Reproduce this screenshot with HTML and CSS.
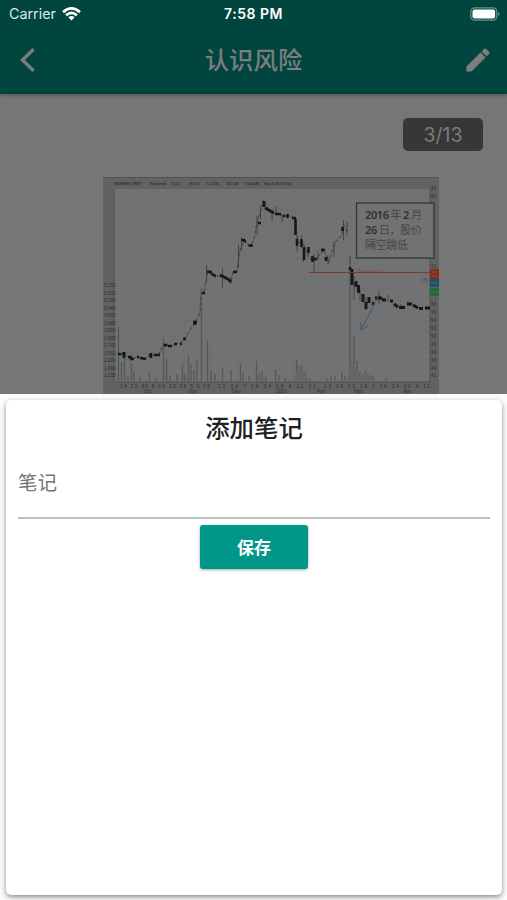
FILE: index.html
```html
<!DOCTYPE html>
<html lang="zh-CN">
<head>
<meta charset="utf-8">
<title>认识风险</title>
<link rel="stylesheet" href="styles.css">
</head>
<body>
<div class="screen">
  <header class="header">
    <div class="status">
      <div class="carrier"><span>Carrier</span>
        <svg width="19" height="14" viewBox="0 0 18 14" preserveAspectRatio="none" fill="none" stroke="#fff" stroke-width="2.6"><path d="M1 5.2Q9-2.3 17 5.2M3.9 8.3Q9 3.4 14.1 8.3"/><path d="M6 10.2Q9 7.9 12 10.2L9 13.5Z" fill="#fff" stroke="none"/></svg>
      </div>
      <div class="time">7:58 PM</div>
      <svg class="battery" width="31" height="14" viewBox="0 0 31 14"><rect x=".8" y=".8" width="26" height="12.4" rx="3.6" fill="none" stroke="#6a958e" stroke-width="1.2"/><rect x="2.5" y="2.5" width="22.6" height="9" rx="2" fill="#fff"/><path d="M28.2 4.8Q31 7 28.2 9.2Z" fill="#6a958e"/></svg>
    </div>
    <div class="nav">
      <svg width="17" height="24" viewBox="0 0 17 24" fill="none" stroke="#7d7d80" stroke-width="3.4"><path d="M14.500 1.2L3.500 12L14.500 22.8"/></svg>
      <h1>认识风险</h1>
      <svg width="30" height="30" viewBox="0 0 24 24" fill="#7e7d80" stroke="#7e7d80" stroke-width=".5" stroke-linejoin="round"><path d="M3 17.25V21h3.75L17.81 9.94l-3.75-3.75L3 17.25zM20.71 7.04a1 1 0 0 0 0-1.41l-2.34-2.34a1 1 0 0 0-1.41 0l-1.83 1.83 3.75 3.75 1.83-1.83z"/></svg>
    </div>
  </header>
  <main class="content">
    <div class="counter">3/13</div>
    <svg class="chart" width="336" height="217" viewBox="103 177 336 217">
      <rect x="103" y="177" width="336" height="217" fill="#626262"/>
      <rect x="114" y="189" width="316" height="193" fill="#707274"/>
      <path d="M103 177.5H439" stroke="#525252"/>
      <path d="M114 210H430M114 226H430M114 242H430M114 258H430M114 289H430M114 305H430M114 321H430M114 337H430M114 353H430M130 189V382M157 189V382M184 189V382M211 189V382M238 189V382M265 189V382M292 189V382M319 189V382M373 189V382M400 189V382" stroke="#6d6f71" stroke-width=".7"/>
      <path d="M114 189V382H430V189" fill="none" stroke="#4a4a4a" stroke-width=".8"/>
      <g class="ticks">
        <g class="legend"><text x="114" y="185">GESHEN, [TNT]</text><text x="150" y="184.500">Weekend</text><text x="171" y="184.500">1=1.0</text><text x="189" y="184.500">H=1.0</text><text x="207" y="184.500">L=1.04</text><text x="226" y="184.500">O=1.04</text><text x="245" y="184.500">V=42.0K</text><text x="264" y="184.500">Sep 0.00 / 0.00p</text></g>
        <text x="104" y="287">5.720</text><text x="104" y="294.500">5.600</text><text x="104" y="302">5.360</text><text x="104" y="309.500">5.460</text><text x="104" y="317">4.500</text><text x="104" y="324.500">3.880</text><text x="104" y="332">3.500</text><text x="104" y="339.500">2.880</text><text x="104" y="347">2.700</text><text x="104" y="354.500">2.500</text><text x="104" y="362">2.200</text><text x="104" y="369.500">1.600</text><text x="104" y="377">1.150</text>
        <text x="431" y="190">81</text><text x="431" y="198">80</text><text x="431" y="268">71</text><text x="431" y="306">68</text><text x="431" y="314">76</text><text x="431" y="322">54</text><text x="431" y="330">52</text><text x="431" y="338">53</text><text x="431" y="346">45</text><text x="431" y="354">43</text><text x="431" y="362">38</text><text x="431" y="370">40</text><text x="431" y="377">41</text>
        <text x="120" y="387.500" textLength="90">14 23 30 8 16 20 28 5 9 19</text><text x="218" y="387.500" textLength="98">13 20 7 14 24 28 4 11 21</text><text x="324" y="387.500" textLength="106">12 19 22 28 7 14 24 30 4 11</text><text x="144" y="393">Oct</text><text x="189" y="393">Nov</text><text x="232" y="393">Dec</text><text x="276" y="393">2016</text><text x="317" y="393">Feb</text><text x="354" y="393">Mar</text><text x="403" y="393">Apr</text>
      </g>
      <path class="volume" d="M118.500 381V326M121.500 381V362M124.500 381V358M128 381V376M131.500 381V363M134 381V371M140 381V377M149.500 381V372M156 381V378M163.500 381V338M166.500 381V359M170 381V376M177 381V374M182.500 381V364M185 381V374M188.500 381V356M191 381V364M194 381V370M197 381V361M201.500 381V289M207.500 381V340M211 381V371M215 381V374M222.500 381V368M231 381V370M240.500 381V363M243 381V373M249 381V376M256.500 381V361M259 381V375M262 381V371M266 381V376M275.500 381V370M279 381V375M285 381V378M296.500 381V360M299 381V366M302 381V366M305 381V372M310 381V378M327 381V378M331 381V376M335 381V376M342 381V372M345 381V376M350 381V276M354 381V336M357 381V361M360 381V372M365 381V370M368 381V376M373 381V376M386 381V378"/>
      <path d="M347 381L351 359L355 366L360 378L366 371L376 381M294 381L298 365L304 373L309 381M256 381L261 372L266 381" fill="#656763"/>
      <path class="trend" d="M118 355L124 354L130 359L138 357L145 359L150 355L158 355.500L163 346L170 346L180 343L185 338L190 330L196 321L200 313L201 293L204 293L208 270L210 272L218 276L225 278L231 282L233 272L237 271L240 250L244 241L250 246L254 240L257 222L261 210L264 202L270 211L276 214L283 216L290 215L295 220L298 242L304 245L308 255L313 262L318 257L324 250L329 262L335 242L342 235L344 226L347 232"/>
      <path class="wick" d="M222.500 268V288M231 277V284M206.500 265V283M238.500 245V268M241.500 237V251M257 216V235M260.500 205V219M263 200V207M272 209V221M276 206V214M282 214V222M297 236V252M301.500 235V248M303.500 248V262M308 247V257M314 254V273M318 251V260M323 248V251M328 255V264M334 242V257M343.500 220V240M347 222V235M350 256V275M354 276V300M360 290V301M366 297V310M379 291V304M388 295V302M401 304V309M408 301V306M421 307V310"/>
      <path class="candles" d="M118 354H121M122 354H125.500M124 352V358M128 357H132M130 359H134M137 357H139M140 358L146 359M149 355H152M151 353V358M154 355H160M163.500 345H167.500M168 346H172M174 344H177M180 344H182M183 339H186M193 322.500H197M195 320.500V325M202 293H205M207 272H212M211 273.500L216 276.500M220 275L228 279M228 279L231 282M233 272H237M241 240H245M243 241H246M248.500 245.500H253M258 223H261M264 201V207M265 208L274 213M275 214H281M283 216H285M287.500 214V218M292 218H296M295.500 219V235M297 239V246M301.500 239V247M304 247V260M308.500 247V253M312.500 256V262M314 259H317M321 250H325M326 257V261M342.500 227V231M350 267V270"/>
      <path class="candles heavy" d="M352 269V285M356 281V287M358.500 285V293M363 294V302M366 302V309M369 297V303M372 303.500H374M375 298H379M379 297L382 299M382 300H386M390 301H393M394 304L398 307M399 307.500H405M407 304H412M413 305L418 308M419 308.500H423M425 308H430"/>
      <path d="M309 272.500H430" stroke="#7e3b2d"/><text x="358" y="272" fill="#853d31" font-size="4.300" font-family="Liberation Sans">Resistance 1</text>
      <path d="M379 295L361 330M361 330V322M361 330L368 326" fill="none" stroke="#49545f"/>
      <g><rect x="430" y="269" width="9" height="10" fill="#8b2b1b"/><rect x="430" y="279" width="9" height="8" fill="#1d5269"/><rect x="430" y="288" width="9" height="8" fill="#236c36"/><path d="M432 272H437M432 276H437M431 283H438M432 292H438" stroke="#667" stroke-width=".8"/></g>
      <text x="420" y="282" fill="#424e55" font-size="5">1.15</text>
      <rect x="356.500" y="203" width="77.500" height="55" fill="#707274" stroke="#303030" stroke-width="1.200"/>
      <g class="note"><text x="365" y="218.500" textLength="57"><tspan class="number">2016</tspan> 年 <tspan class="number">2</tspan> 月</text><text x="365" y="233.500" textLength="57"><tspan class="number">26</tspan> 日，股价</text><text x="365" y="249" textLength="43">隔空跳低</text></g>
    </svg>
  </main>
  <section class="sheet">
    <div class="card">
      <h2>添加笔记</h2>
      <div class="field">笔记</div>
      <button class="save">保存</button>
    </div>
  </section>
</div>
</body>
</html>
```
FILE: styles.css
```css
* { box-sizing: border-box; }
body { margin: 0; font-family: "Inter", "Noto Sans CJK SC", sans-serif; }
svg { display: block; flex: none; }
.screen { width: 507px; height: 900px; display: flex; flex-direction: column; overflow: hidden; background: #767676; }
.header { height: 94px; flex: none; background: #00463e; box-shadow: 0 1px 4px rgba(0,0,0,.35); }
.status { height: 27px; padding: 0 6px 0 9px; display: grid; grid-template-columns: 1fr auto 1fr; align-items: center; color: #fff; font-size: 14px; }
.carrier { display: flex; align-items: center; gap: 6px; color: #dce7e5; }
.carrier span { font-size: 14.3px; }
.time { font-weight: 600; font-size: 14px; letter-spacing: .5px; margin-right: 3px; }
.battery { justify-self: end; }
.nav { height: 66px; padding: 0 14px 0 19px; display: grid; grid-template-columns: 30px 1fr 35px; align-items: center; }
.nav svg:last-child { justify-self: end; }
h1, h2 { margin: 0; text-align: center; font-size: 24.4px; line-height: 34px; font-weight: 500; }
h1 { color: #7d7d80; }
.content { height: 300px; flex: none; display: flex; flex-direction: column; padding-top: 24px; }
.counter { width: 80px; height: 33px; margin-right: 24px; align-self: flex-end; border-radius: 5px; background: #373737; color: #7b7b7b; font-size: 19.5px; line-height: 34px; text-align: center; }
.chart { margin: 26px 0 0 103px; }
.ticks { fill: #2e2e2e; font: 4.8px "Liberation Sans", sans-serif; }
.legend { font-size: 3.7px; font-weight: 700; }
.volume { stroke: #545950; stroke-width: 1.3; }
.trend { fill: none; stroke: #46494a; stroke-width: 1.1; stroke-dasharray: 4 1.5; }
.wick { fill: none; stroke: #3d3f40; stroke-width: .9; }
.candles { fill: none; stroke: #171819; stroke-width: 2.6; }
.heavy { stroke-width: 3; }
.note { fill: #303030; font: 300 11px "Noto Sans CJK SC", sans-serif; }
.number { font-family: "Noto Sans", sans-serif; font-weight: 600; }
.sheet { height: 506px; flex: none; padding: 6px 5px 5px 6px; background: #fbfbfb; }
.card { height: 495px; display: flex; flex-direction: column; align-items: center; padding: 11px 12px; background: #fff; border-radius: 5px; box-shadow: 0 2px 5px rgba(0,0,0,.45); }
h2 { color: #212121; height: 36px; }
.field { width: 472px; height: 72px; padding-top: 16px; border-bottom: 2px solid #c0c0c0; color: #757575; font-size: 19.5px; line-height: 41px; }
.save { width: 108px; height: 44px; margin-top: 6px; padding: 0; border: 0; border-radius: 3px; background: #009688; box-shadow: 0 1px 3px rgba(0,0,0,.35); color: #fff; font: 700 17px/44px "Noto Sans CJK SC", sans-serif; }
```
